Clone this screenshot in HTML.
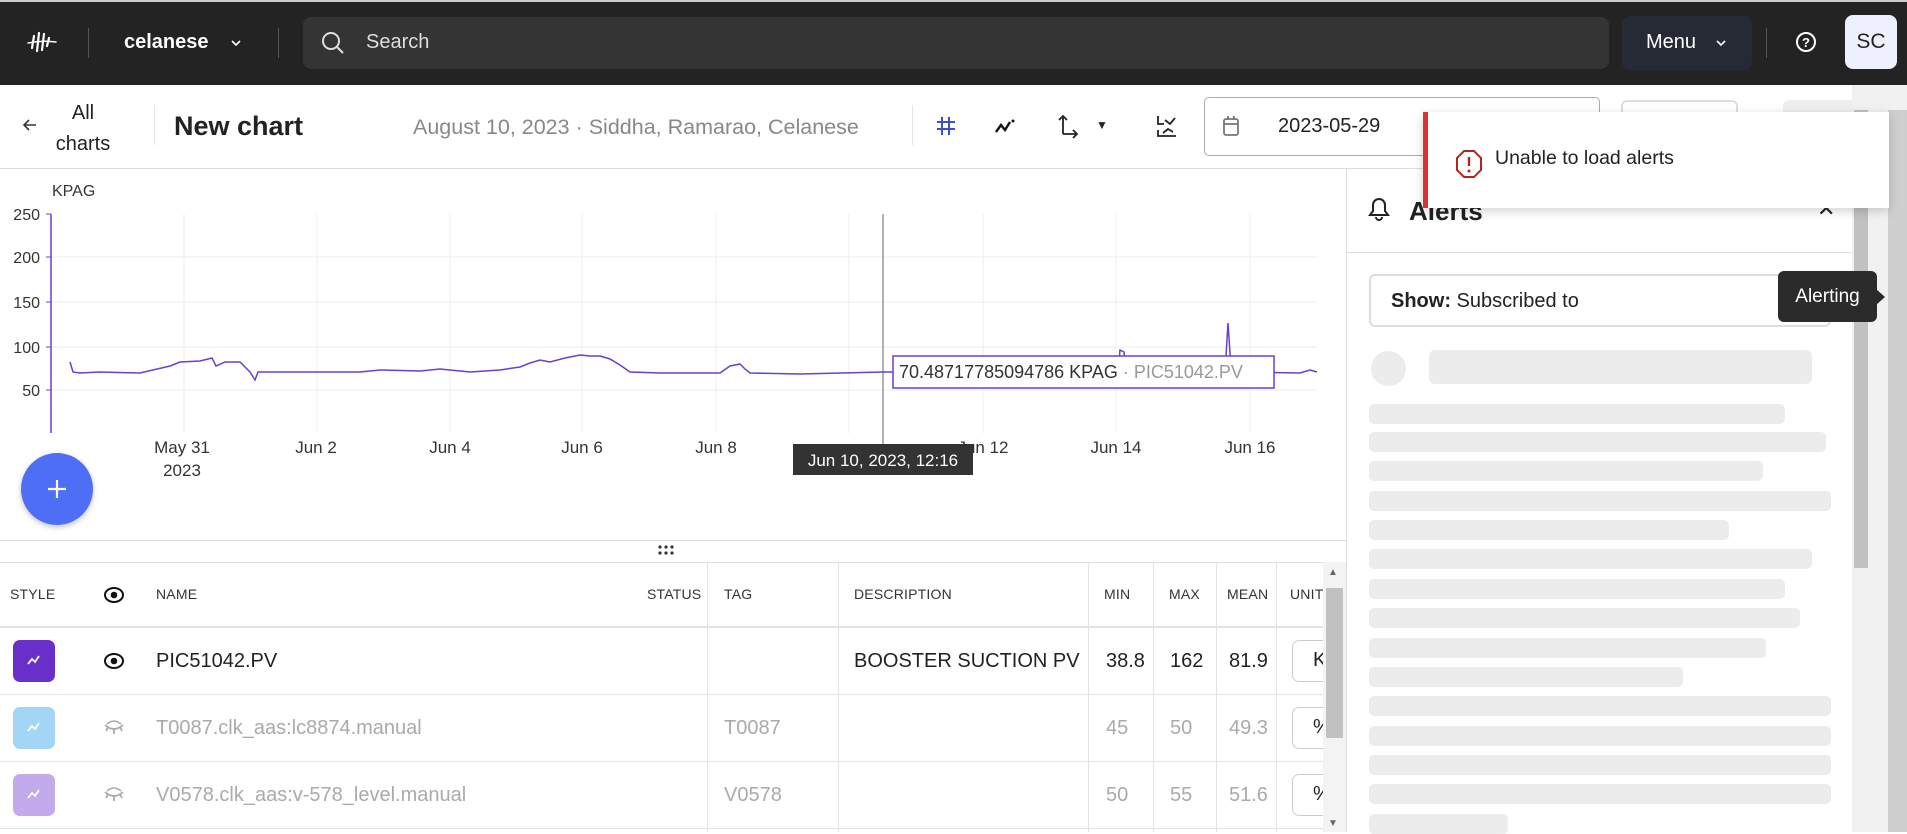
<!DOCTYPE html>
<html><head><meta charset="utf-8"><style>
*{box-sizing:border-box;margin:0;padding:0}
body{width:1907px;height:832px;overflow:hidden;background:#fff;font-family:"Liberation Sans",sans-serif;color:#222;position:relative}
.a{position:absolute}
.top{left:0;top:0;width:1907px;height:85px;background:#232323;border-top:2px solid #ccc}
.sk{position:absolute;left:1369px;height:20px;border-radius:5px;background:#ececec}
.th{position:absolute;top:586px;font-size:14px;color:#333;letter-spacing:.2px}
.vl{position:absolute;top:562px;width:1px;height:270px;background:#e3e3e3}
.hl{position:absolute;left:0;width:1323px;height:1px;background:#e3e3e3}
.sw{position:absolute;left:13px;width:42px;height:42px;border-radius:7px}
.td{position:absolute;font-size:20px}
.g{color:#aaa}
.ub{position:absolute;left:1292px;width:40px;height:42px;border:1px solid #ccc;border-radius:7px;font-size:20px;padding:8px 0 0 20px}
</style></head><body>
<div class="a top"></div>
<svg class="a" style="left:26px;top:30px" width="32" height="24" viewBox="0 0 32 24"><g stroke="#fff" stroke-width="2.2" stroke-linecap="round"><line x1="8" y1="6" x2="6" y2="18"/><line x1="13" y1="3" x2="11" y2="21"/><line x1="18" y1="4" x2="16" y2="20"/><line x1="23" y1="8" x2="21" y2="16"/><path d="M2 13 Q16 10 30 12" stroke-width="1.5" fill="none"/></g></svg>
<div class="a" style="left:88px;top:28px;width:1px;height:30px;background:#555"></div>
<div class="a" style="left:124px;top:31px;color:#fff;font-size:20px;font-weight:bold">celanese</div>
<svg class="a" style="left:230px;top:38px" width="12" height="10"><path d="M2 3l4 4 4-4" stroke="#fff" stroke-width="1.6" fill="none"/></svg>
<div class="a" style="left:278px;top:28px;width:1px;height:30px;background:#555"></div>
<div class="a" style="left:303px;top:17px;width:1306px;height:52px;background:#343434;border-radius:8px"></div>
<svg class="a" style="left:320px;top:30px" width="26" height="26" viewBox="0 0 26 26"><circle cx="11" cy="11" r="8" stroke="#ddd" stroke-width="2" fill="none"/><line x1="17" y1="17" x2="23" y2="23" stroke="#ddd" stroke-width="2"/></svg>
<div class="a" style="left:366px;top:31px;color:#ddd;font-size:20px">Search</div>
<div class="a" style="left:1622px;top:16px;width:130px;height:54px;background:#262a35;border-radius:8px"></div>
<div class="a" style="left:1646px;top:31px;color:#fff;font-size:20px">Menu</div>
<svg class="a" style="left:1715px;top:38px" width="12" height="10"><path d="M2 3l4 4 4-4" stroke="#fff" stroke-width="1.6" fill="none"/></svg>
<div class="a" style="left:1766px;top:28px;width:1px;height:30px;background:#555"></div>
<svg class="a" style="left:1794px;top:30px" width="24" height="24"><circle cx="12" cy="12" r="9" stroke="#fff" stroke-width="2" fill="none"/><text x="12" y="17" fill="#fff" font-size="13" font-weight="bold" text-anchor="middle" font-family="Liberation Sans">?</text></svg>
<div class="a" style="left:1845px;top:15px;width:52px;height:54px;background:#eef0ff;border-radius:8px;font-size:21px;text-align:center;line-height:54px;color:#222">SC</div>

<!-- toolbar -->
<svg class="a" style="left:22px;top:118px" width="16" height="14"><path d="M14 7H2M7 2L2 7l5 5" stroke="#333" stroke-width="1.6" fill="none"/></svg>
<div class="a" style="left:50px;top:98px;font-size:20px;text-align:center;line-height:31px;width:66px">All<br>charts</div>
<div class="a" style="left:154px;top:105px;width:1px;height:40px;background:#e5e5e5"></div>
<div class="a" style="left:174px;top:111px;font-size:27px;font-weight:bold;color:#222">New chart</div>
<div class="a" style="left:413px;top:115px;font-size:21.5px;color:#888">August 10, 2023 · Siddha, Ramarao, Celanese</div>
<div class="a" style="left:912px;top:105px;width:1px;height:40px;background:#e5e5e5"></div>
<svg class="a" style="left:936px;top:116px" width="20" height="20"><g stroke="#3d4fc4" stroke-width="2"><line x1="6" y1="1" x2="6" y2="19"/><line x1="13" y1="1" x2="13" y2="19"/><line x1="1" y1="6" x2="19" y2="6"/><line x1="1" y1="13" x2="19" y2="13"/></g></svg>
<svg class="a" style="left:994px;top:116px" width="22" height="20"><path d="M2 16l5-7 4 5 5-8" stroke="#111" stroke-width="2.4" fill="none"/><circle cx="19" cy="5" r="1.5" fill="#111"/></svg>
<svg class="a" style="left:1056px;top:112px" width="26" height="28"><path d="M7 22V4M3 8l4-4 4 4M7 22h14M17 18l4 4-4 4" stroke="#222" stroke-width="1.8" fill="none"/></svg>
<div class="a" style="left:1096px;top:118px;font-size:12px">▼</div>
<svg class="a" style="left:1155px;top:113px" width="24" height="26"><g stroke="#222" stroke-width="1.8" fill="none"><path d="M3 3v8h6M3 17v6h18M10 7l5 4 5-6M8 20l5-4 5 3"/></g></svg>
<div class="a" style="left:1204px;top:97px;width:396px;height:59px;border:1px solid #aaa;border-radius:5px"></div>
<svg class="a" style="left:1222px;top:115px" width="18" height="22"><rect x="2" y="4" width="14" height="16" rx="2" stroke="#777" stroke-width="1.8" fill="none"/><line x1="2" y1="9" x2="16" y2="9" stroke="#777" stroke-width="1.8"/><line x1="6" y1="1" x2="6" y2="5" stroke="#777" stroke-width="1.8"/><line x1="12" y1="1" x2="12" y2="5" stroke="#777" stroke-width="1.8"/></svg>
<div class="a" style="left:1278px;top:115px;font-size:20px;color:#222">2023-05-29</div>
<div class="a" style="left:1621px;top:100px;width:117px;height:56px;border:2px solid #ddd;border-radius:6px"></div>
<div class="a" style="left:1783px;top:100px;width:110px;height:56px;background:#eee;border-radius:6px"></div>
<div class="a" style="left:0;top:168px;width:1907px;height:1px;background:#ddd"></div>

<!-- chart -->
<svg class="a" style="left:0;top:169px" width="1346" height="370" viewBox="0 169 1346 370">
<g stroke="#eee" stroke-width="1">
<line x1="51" y1="257" x2="1317" y2="257"/><line x1="51" y1="302" x2="1317" y2="302"/><line x1="51" y1="347" x2="1317" y2="347"/><line x1="51" y1="390" x2="1317" y2="390"/>
<line x1="184" y1="214" x2="184" y2="433"/><line x1="317" y1="214" x2="317" y2="433"/><line x1="450" y1="214" x2="450" y2="433"/><line x1="582" y1="214" x2="582" y2="433"/><line x1="716" y1="214" x2="716" y2="433"/><line x1="849" y1="214" x2="849" y2="433"/><line x1="983" y1="214" x2="983" y2="433"/><line x1="1116" y1="214" x2="1116" y2="433"/><line x1="1250" y1="214" x2="1250" y2="433"/>
</g>
<line x1="51" y1="214" x2="51" y2="433" stroke="#6a3ecf" stroke-width="1.5"/>
<g stroke="#6a3ecf"><line x1="46" y1="214" x2="51" y2="214"/><line x1="46" y1="257" x2="51" y2="257"/><line x1="46" y1="302" x2="51" y2="302"/><line x1="46" y1="347" x2="51" y2="347"/><line x1="46" y1="390" x2="51" y2="390"/></g>
<g font-family="Liberation Sans" font-size="16" fill="#333" text-anchor="end"><text x="40" y="220">250</text><text x="40" y="263">200</text><text x="40" y="308">150</text><text x="40" y="353">100</text><text x="40" y="396">50</text></g>
<text x="52" y="196" font-family="Liberation Sans" font-size="16" fill="#333">KPAG</text>
<line x1="883" y1="214" x2="883" y2="450" stroke="#999" stroke-width="1.5"/>
<path d="M70,362 L73,372 L80,373 L100,372 L140,373 L170,366 L180,362 L200,361 L212,358 L216,366 L225,362 L240,362 L250,372 L255,380 L258,372 L300,372 L360,372 L380,370 L420,371 L440,369 L470,372 L500,370 L520,367 L530,363 L540,360 L550,362 L565,358 L580,355 L590,356 L600,356 L610,359 L620,365 L630,372 L660,373 L720,373 L730,366 L740,364 L745,369 L750,373 L800,374 L883,372 L1100,372 L1118,372 L1120,350 L1124,352 L1126,372 L1200,372 L1225,372 L1228,323 L1231,368 L1240,372 L1300,373 L1310,370 L1317,372" stroke="#6a3ecf" stroke-width="1.5" fill="none"/>
<g font-family="Liberation Sans" font-size="17" fill="#333" text-anchor="middle"><text x="182" y="453">May 31</text><text x="182" y="476">2023</text><text x="316" y="453">Jun 2</text><text x="450" y="453">Jun 4</text><text x="582" y="453">Jun 6</text><text x="716" y="453">Jun 8</text><text x="983" y="453">Jun 12</text><text x="1116" y="453">Jun 14</text><text x="1250" y="453">Jun 16</text></g>
<rect x="893" y="356" width="381" height="32" fill="#fff" stroke="#6a3ecf" stroke-width="1.5"/>
<text x="899" y="378" font-family="Liberation Sans" font-size="18" fill="#333">70.48717785094786 KPAG <tspan fill="#999">· PIC51042.PV</tspan></text>
<rect x="793" y="444" width="180" height="31" fill="#333"/>
<text x="883" y="466" font-family="Liberation Sans" font-size="17" fill="#fff" text-anchor="middle">Jun 10, 2023, 12:16</text>
</svg>
<div class="a" style="left:21px;top:453px;width:72px;height:72px;border-radius:50%;background:#4d6ef5;box-shadow:0 2px 6px rgba(0,0,0,.25)"></div>
<svg class="a" style="left:45px;top:477px" width="24" height="24"><path d="M12 3v18M3 12h18" stroke="#fff" stroke-width="2.2"/></svg>

<!-- table -->
<div class="a" style="left:0;top:540px;width:1346px;height:1px;background:#ddd"></div>
<svg class="a" style="left:657px;top:544px" width="18" height="12"><g fill="#333"><circle cx="3" cy="3" r="1.6"/><circle cx="9" cy="3" r="1.6"/><circle cx="15" cy="3" r="1.6"/><circle cx="3" cy="9" r="1.6"/><circle cx="9" cy="9" r="1.6"/><circle cx="15" cy="9" r="1.6"/></g></svg>
<div class="a" style="left:0;top:562px;width:1346px;height:1px;background:#ddd"></div>
<div class="vl" style="left:707px"></div><div class="vl" style="left:838px"></div><div class="vl" style="left:1088px"></div><div class="vl" style="left:1153px"></div><div class="vl" style="left:1216px"></div><div class="vl" style="left:1276px"></div>
<div class="hl" style="top:626px;height:2px"></div><div class="hl" style="top:694px"></div><div class="hl" style="top:761px"></div><div class="hl" style="top:828px"></div>
<div class="th" style="left:10px">STYLE</div>
<svg class="a" style="left:103px;top:585px" width="22" height="20"><ellipse cx="11" cy="10" rx="9" ry="7" fill="none" stroke="#111" stroke-width="2"/><circle cx="11" cy="10" r="3.3" fill="#111"/></svg>
<div class="th" style="left:156px">NAME</div><div class="th" style="left:647px">STATUS</div><div class="th" style="left:724px">TAG</div><div class="th" style="left:854px">DESCRIPTION</div><div class="th" style="left:1104px">MIN</div><div class="th" style="left:1169px">MAX</div><div class="th" style="left:1227px">MEAN</div><div class="th" style="left:1290px">UNIT</div>

<div class="sw" style="top:640px;background:#6b2fc9"></div>
<div class="sw" style="top:707px;background:#a3d6f6"></div>
<div class="sw" style="top:774px;background:#c3aaea"></div>
<svg class="a" style="left:26px;top:653px" width="16" height="14"><path d="M2 11l4-5 3 3 4-6" stroke="#fff" stroke-width="1.8" fill="none"/></svg>
<svg class="a" style="left:26px;top:720px" width="16" height="14"><path d="M2 11l4-5 3 3 4-6" stroke="#fff" stroke-width="1.8" fill="none"/></svg>
<svg class="a" style="left:26px;top:787px" width="16" height="14"><path d="M2 11l4-5 3 3 4-6" stroke="#fff" stroke-width="1.8" fill="none"/></svg>
<svg class="a" style="left:103px;top:651px" width="22" height="20"><ellipse cx="11" cy="10" rx="9" ry="7" fill="none" stroke="#111" stroke-width="2"/><circle cx="11" cy="10" r="3.3" fill="#111"/></svg>
<svg class="a" style="left:103px;top:717px" width="22" height="22"><path d="M2 8q9 8 18 0M11 12v5M5 10l-2 4M17 10l2 4" stroke="#aaa" stroke-width="1.8" fill="none"/><path d="M4 7q7-6 14 0" stroke="#aaa" stroke-width="1.5" fill="none"/></svg>
<svg class="a" style="left:103px;top:784px" width="22" height="22"><path d="M2 8q9 8 18 0M11 12v5M5 10l-2 4M17 10l2 4" stroke="#aaa" stroke-width="1.8" fill="none"/><path d="M4 7q7-6 14 0" stroke="#aaa" stroke-width="1.5" fill="none"/></svg>
<div class="td" style="left:156px;top:650px">PIC51042.PV</div>
<div class="td" style="left:854px;top:650px">BOOSTER SUCTION PV</div>
<div class="td" style="left:1106px;top:650px">38.8</div><div class="td" style="left:1170px;top:650px">162</div><div class="td" style="left:1229px;top:650px">81.9</div>
<div class="td g" style="left:156px;top:717px">T0087.clk_aas:lc8874.manual</div><div class="td g" style="left:724px;top:717px">T0087</div>
<div class="td g" style="left:1106px;top:717px">45</div><div class="td g" style="left:1170px;top:717px">50</div><div class="td g" style="left:1229px;top:717px">49.3</div>
<div class="td g" style="left:156px;top:784px">V0578.clk_aas:v-578_level.manual</div><div class="td g" style="left:724px;top:784px">V0578</div>
<div class="td g" style="left:1106px;top:784px">50</div><div class="td g" style="left:1170px;top:784px">55</div><div class="td g" style="left:1229px;top:784px">51.6</div>
<div class="ub" style="top:640px">K</div><div class="ub" style="top:707px">%</div><div class="ub" style="top:774px">%</div>
<div class="a" style="left:1323px;top:562px;width:23px;height:270px;background:#f3f3f3"></div>
<div class="a" style="left:1326px;top:588px;width:17px;height:150px;background:#c1c1c1"></div>
<div class="a" style="left:1328px;top:567px;font-size:10px;color:#666">▲</div>
<div class="a" style="left:1328px;top:818px;font-size:10px;color:#666">▼</div>

<!-- right panel -->
<div class="a" style="left:1346px;top:169px;width:1px;height:663px;background:#ddd"></div>
<svg class="a" style="left:1367px;top:196px" width="24" height="26"><path d="M12 3a6 6 0 0 0-6 6v6l-3 4h18l-3-4V9a6 6 0 0 0-6-6zM9 21a3 3 0 0 0 6 0" stroke="#222" stroke-width="2" fill="none"/></svg>
<div class="a" style="left:1409px;top:196px;font-size:26px;font-weight:bold">Alerts</div>
<div class="a" style="left:1817px;top:196px;font-size:22px">✕</div>
<div class="a" style="left:1347px;top:252px;width:505px;height:1px;background:#ddd"></div>
<div class="a" style="left:1369px;top:274px;width:462px;height:53px;border:2px solid #ddd;border-radius:6px;padding:14px 0 0 20px;font-size:20px"><b>Show:</b> Subscribed to</div>
<div class="a" style="left:1371px;top:351px;width:35px;height:35px;border-radius:50%;background:#ececec"></div>
<div class="a" style="left:1429px;top:350px;width:383px;height:34px;border-radius:6px;background:#ececec"></div>
<div class="sk" style="top:404px;width:416px"></div>
<div class="sk" style="top:432px;width:457px"></div>
<div class="sk" style="top:461px;width:394px"></div>
<div class="sk" style="top:491px;width:462px"></div>
<div class="sk" style="top:520px;width:360px"></div>
<div class="sk" style="top:549px;width:443px"></div>
<div class="sk" style="top:579px;width:416px"></div>
<div class="sk" style="top:608px;width:431px"></div>
<div class="sk" style="top:638px;width:397px"></div>
<div class="sk" style="top:667px;width:314px"></div>
<div class="sk" style="top:696px;width:462px"></div>
<div class="sk" style="top:726px;width:462px"></div>
<div class="sk" style="top:755px;width:462px"></div>
<div class="sk" style="top:784px;width:462px"></div>
<div class="sk" style="top:814px;width:139px"></div>
<div class="a" style="left:1852px;top:85px;width:55px;height:747px;background:#f1f1f1"></div>
<div class="a" style="left:1854px;top:110px;width:14px;height:458px;background:#c1c1c1"></div>
<div class="a" style="left:1888px;top:110px;width:19px;height:722px;background:#cfcfcf"></div>
<div class="a" style="left:1778px;top:271px;width:99px;height:51px;background:#2b2b2b;border-radius:6px;color:#fff;font-size:19px;text-align:center;line-height:51px">Alerting</div>
<div class="a" style="left:1876px;top:289px;width:0;height:0;border-top:8px solid transparent;border-bottom:8px solid transparent;border-left:9px solid #2b2b2b"></div>

<!-- toast -->
<div class="a" style="left:1423px;top:112px;width:466px;height:96px;background:#fff;border-left:5px solid #e03131;box-shadow:0 3px 10px rgba(0,0,0,.18)"></div>
<svg class="a" style="left:1455px;top:149px" width="28" height="30"><path d="M9 2h10l7 7v12l-7 7H9l-7-7V9z" stroke="#b3261e" stroke-width="2" fill="none"/><line x1="14" y1="8" x2="14" y2="17" stroke="#b3261e" stroke-width="2.4"/><circle cx="14" cy="22" r="1.5" fill="#b3261e"/></svg>
<div class="a" style="left:1495px;top:147px;font-size:19.5px;color:#222">Unable to load alerts</div>
</body></html>
